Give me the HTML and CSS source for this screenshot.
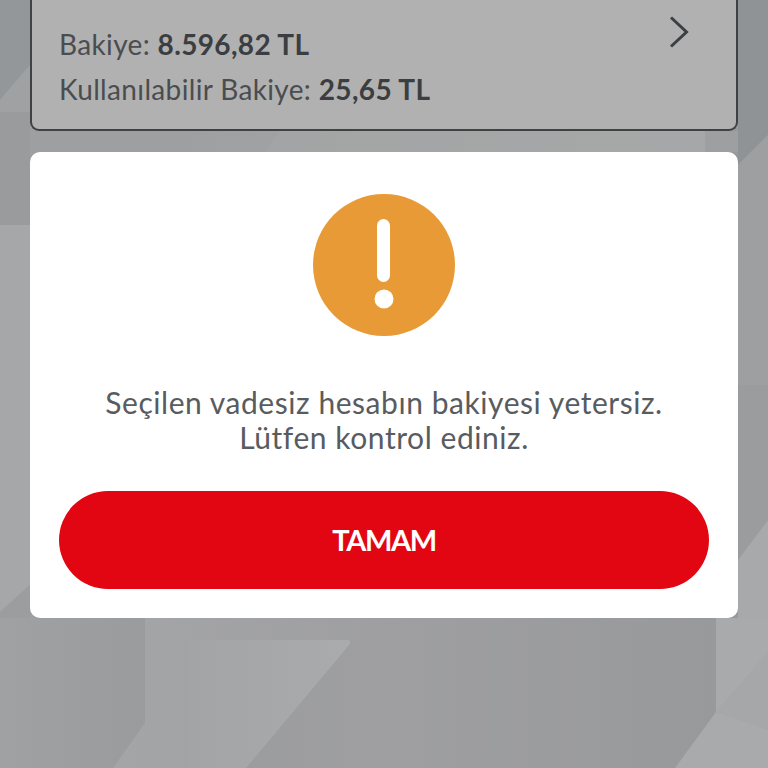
FILE: index.html
```html
<!DOCTYPE html>
<html lang="tr">
<head>
<meta charset="utf-8">
<title>Bakiye</title>
<link rel="stylesheet" href="styles.css">
</head>
<body>
<svg class="backdrop" viewBox="0 0 768 768" aria-hidden="true">
  <defs>
    <linearGradient id="base" x1="0" y1="0" x2="1" y2="0">
      <stop offset="0" stop-color="#a0a1a2"/>
      <stop offset="0.19" stop-color="#9a9b9c"/>
      <stop offset="0.5" stop-color="#9f9fa1"/>
      <stop offset="0.94" stop-color="#98999a"/>
    </linearGradient>
    <linearGradient id="strip" x1="0" y1="0" x2="1" y2="0">
      <stop offset="0" stop-color="#a4a5a6"/>
      <stop offset="1" stop-color="#9f9fa1"/>
    </linearGradient>
    <linearGradient id="inner" x1="0" y1="0" x2="1" y2="0">
      <stop offset="0" stop-color="#a3a4a5"/>
      <stop offset="1" stop-color="#aaabad"/>
    </linearGradient>
    <linearGradient id="gap" x1="0" y1="0" x2="1" y2="0">
      <stop offset="0" stop-color="#9e9fa0"/>
      <stop offset="1" stop-color="#a9aaab"/>
    </linearGradient>
  </defs>
  <rect width="768" height="768" fill="url(#base)"/>
  <path d="M0 0H30V65L0 100Z" fill="#94979a"/>
  <path d="M0 100L30 65V112H0Z" fill="#a0a1a2"/>
  <path d="M0 112H30V225H0Z" fill="#9a9b9c"/>
  <path d="M0 225H30V585L0 612Z" fill="#a6a7a8"/>
  <path d="M0 612L30 585V618H0Z" fill="#9c9d9e"/>
  <path d="M145 618H384V640H188V768H113L145 723Z" fill="url(#strip)"/>
  <path d="M188 640H347Q352 640 349 645L246 768H188Z" fill="url(#inner)"/>
  <path d="M738 0H768V135L738 165Z" fill="#8f9395"/>
  <path d="M738 165L768 135V385H738Z" fill="#9e9fa0"/>
  <path d="M738 385H768V520L738 560Z" fill="#9a9c9e"/>
  <path d="M738 560L768 520V618H738Z" fill="#a8a9aa"/>
  <path d="M716 618H768V768H675L716 712Z" fill="#a9aaab"/>
  <path d="M716 712L768 652V730Z" fill="#a6a7a8"/>
  <path d="M30 131H738V152H30Z" fill="#9e9fa0"/>
  <path d="M172 131H705V152H162Z" fill="url(#gap)"/>
  <path d="M280 131H705V152H265Z" fill="#a5a6a7" fill-opacity="0.6"/>
</svg>
<main class="page">
  <section class="account">
    <div class="balances">
      <p class="line">Bakiye: <b>8.596,82 TL</b></p>
      <p class="line">Kullanılabilir Bakiye: <b>25,65 TL</b></p>
    </div>
    <svg class="chevron" viewBox="0 0 20 32" aria-hidden="true">
      <path d="M2 1.5L17.5 16L2 30.5" fill="none" stroke="#3c3f42" stroke-width="3"/>
    </svg>
  </section>
  <section class="dialog">
    <svg class="alert" viewBox="0 0 142 142" aria-hidden="true">
      <circle cx="71" cy="71" r="71" fill="#e89a36"/>
      <rect x="64" y="25" width="13" height="63" rx="6.5" fill="#fff"/>
      <circle cx="71" cy="105" r="9.5" fill="#fff"/>
    </svg>
    <p class="message">Seçilen vadesiz hesabın bakiyesi yetersiz.<br>Lütfen kontrol ediniz.</p>
    <button class="ok" type="button">TAMAM</button>
  </section>
</main>
</body>
</html>
```
FILE: styles.css
```css
html, body {
  margin: 0;
  padding: 0;
  width: 768px;
  height: 768px;
  overflow: hidden;
}
body {
  position: relative;
  font-family: "Lato", "Open Sans", sans-serif;
  color: #44474a;
}
.backdrop {
  position: absolute;
  inset: 0;
  width: 768px;
  height: 768px;
}
.page {
  position: relative;
  display: flex;
  flex-direction: column;
  gap: 21px;
  padding: 0 30px;
  height: 768px;
  box-sizing: border-box;
}
.account {
  display: flex;
  justify-content: space-between;
  align-items: flex-start;
  height: 131px;
  box-sizing: border-box;
  padding: 16px 47px 0 27px;
  background: #b1b1b1;
  border: 2px solid #3f4245;
  border-top: 0;
  border-radius: 0 0 9px 9px;
}
.balances {
  display: flex;
  flex-direction: column;
  gap: 10px;
  padding-top: 11px;
}
.line {
  margin: 0;
  font-size: 28px;
  line-height: 35px;
  letter-spacing: 0.35px;
  color: #4a4d50;
  white-space: nowrap;
}
.line b {
  font-weight: 700;
  color: #3b3e41;
}
.chevron {
  width: 20px;
  height: 32px;
}
.dialog {
  display: flex;
  flex-direction: column;
  align-items: center;
  height: 466px;
  box-sizing: border-box;
  padding: 42px 29px 0;
  background: #fff;
  border-radius: 10px;
}
.alert {
  width: 142px;
  height: 142px;
  flex: none;
}
.message {
  margin: 49px 0 0;
  font-size: 30px;
  line-height: 35px;
  letter-spacing: 0.55px;
  text-align: center;
  color: #585c60;
  white-space: nowrap;
}
.ok {
  margin-top: 36px;
  width: 650px;
  height: 98px;
  border: 0;
  border-radius: 49px;
  background: #e20613;
  color: #fff;
  font-family: inherit;
  font-size: 29px;
  font-weight: 700;
  letter-spacing: -1.4px;
  padding: 0 0 2px;
}
```
